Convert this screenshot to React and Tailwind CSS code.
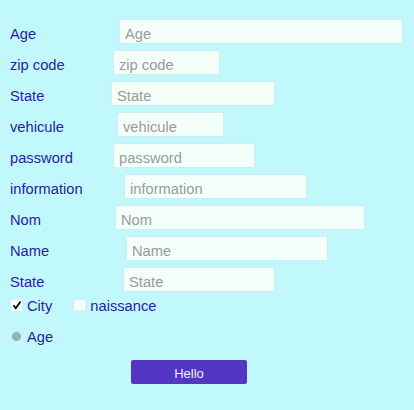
import React from 'react';

// Form rows: label + input, each input sits at its own left offset and width
const rows = [
  { label: 'Age', left: 119, width: 284 },
  { label: 'zip code', left: 113, width: 107 },
  { label: 'State', left: 111, width: 164 },
  { label: 'vehicule', left: 117, width: 107 },
  { label: 'password', left: 113, width: 142 },
  { label: 'information', left: 124, width: 183 },
  { label: 'Nom', left: 115, width: 250 },
  { label: 'Name', left: 126, width: 202 },
  { label: 'State', left: 123, width: 152 },
];

export default function App() {
  return (
    <div className="min-h-[410px] w-[414px] bg-[#c1f8fc] pl-[10px] pt-[19px] text-[14.7px] text-[#2c1c9c] font-['Liberation_Sans',Arial,sans-serif]">
      <div className="flex flex-col gap-[6px]">
        {rows.map((row, i) => (
          <div key={i} className="flex h-[25px] items-center">
            <label className="mt-[5px] w-[100px] shrink-0 leading-none">{row.label}</label>
            <input
              placeholder={row.label}
              style={{ marginLeft: row.left - 110, width: row.width }}
              className="h-[25px] rounded-[2px] border border-[#cdeef0] bg-[#f5fffa] px-[5px] pt-[5px] pb-0 text-[14.7px] text-[#333] placeholder:text-[#9a9a9a] outline-none"
            />
          </div>
        ))}
      </div>

      {/* checkboxes */}
      <div className="mt-[3px] flex h-[20px] items-center">
        <span className="ml-[1px] flex h-[11px] w-[11px] items-center justify-center bg-white">
          <svg width="10" height="10" viewBox="0 0 10 10">
            <path d="M1.5 5.2 L3.8 8.2 L8.6 1.4" fill="none" stroke="#000" strokeWidth="1.8" />
          </svg>
        </span>
        <span className="ml-[5px] mt-[2px] leading-none">City</span>
        <span className="ml-[21px] h-[12px] w-[13px] border border-[#dcecee] bg-[#f7fdfd]"></span>
        <span className="ml-[4px] mt-[2px] leading-none">naissance</span>
      </div>

      {/* radio */}
      <div className="mt-[11px] flex h-[20px] items-center">
        <span className="ml-[1px] flex h-[11px] w-[11px] items-center justify-center rounded-full border border-[#e3f2f3] bg-[#8fb3b9]"></span>
        <span className="ml-[5px] mt-[2px] leading-none">Age</span>
      </div>

      <button className="ml-[121px] mt-[14px] h-[24px] w-[116px] rounded-[2px] bg-[#5337c2] pt-[3px] text-[13px] leading-none text-[#f2eef8]">
        Hello
      </button>
    </div>
  );
}
